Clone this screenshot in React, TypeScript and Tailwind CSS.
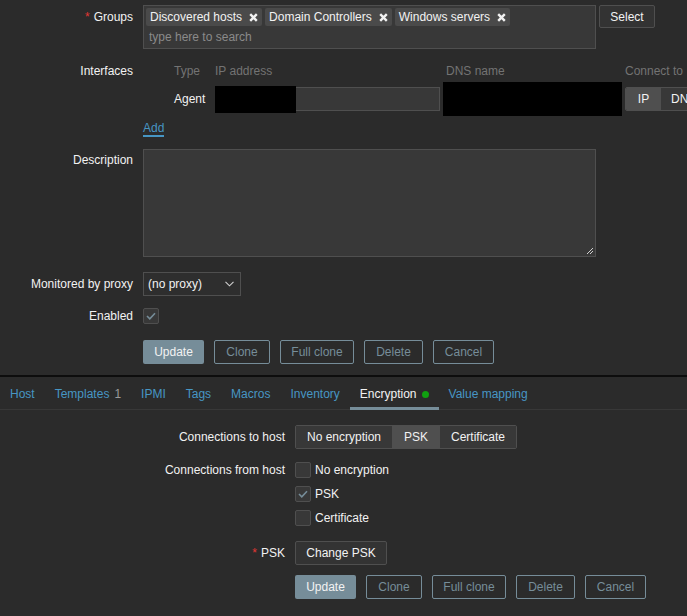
import React from 'react';

const FONT = { fontFamily: '"Liberation Sans", Arial, sans-serif' };

const Star = () => <span className="mr-[4px] text-[#e33734]">*</span>;

const CloseX = () => (
  <svg width="9" height="9" viewBox="0 0 9 9" className="ml-[7px]">
    <path d="M1.2 1.2L7.8 7.8M7.8 1.2L1.2 7.8" stroke="#f2f2f2" strokeWidth="2.4" />
  </svg>
);

const Tag: React.FC<{ text: string }> = ({ text }) => (
  <div className="flex h-[18px] items-center rounded-[2px] bg-[#4a4a4a] pl-[4px] pr-[4px] leading-[18px]">
    <span>{text}</span>
    <CloseX />
  </div>
);

const Check: React.FC<{ checked?: boolean }> = ({ checked }) => (
  <div className="flex h-[16px] w-[16px] items-center justify-center rounded-[2px] border border-[#4f4f4f] bg-[#383838]">
    {checked && (
      <svg width="10" height="8" viewBox="0 0 10 8">
        <path d="M1 4l2.8 2.8L9 1.2" fill="none" stroke="#768d99" strokeWidth="1.6" />
      </svg>
    )}
  </div>
);

const Buttons: React.FC = () => (
  <div className="flex h-[24px] gap-[10px]">
    <button className="h-full w-[61px] rounded-[2px] bg-[#768d99] text-[#f2f2f2]">Update</button>
    <button className="h-full w-[56px] rounded-[2px] border border-[#768d99] text-[#768d99]">Clone</button>
    <button className="h-full w-[74px] rounded-[2px] border border-[#768d99] text-[#768d99]">Full clone</button>
    <button className="h-full w-[59px] rounded-[2px] border border-[#768d99] text-[#768d99]">Delete</button>
    <button className="h-full w-[61px] rounded-[2px] border border-[#768d99] text-[#768d99]">Cancel</button>
  </div>
);

const tabs = ['Host', 'Templates', 'IPMI', 'Tags', 'Macros', 'Inventory', 'Encryption', 'Value mapping'];

const App: React.FC = () => {
  return (
    <div className="h-[616px] w-[687px] overflow-hidden bg-[#2b2b2b] text-[12px] text-[#f2f2f2]" style={FONT}>
      {/* host form, top part */}
      <div className="h-[375px] pt-[5px]">
        {/* Groups */}
        <div className="flex">
          <div className="w-[133px] shrink-0 pt-[5px] text-right leading-[14px]">
            <Star />Groups
          </div>
          <div className="ml-[10px] h-[44px] w-[453px] shrink-0 border border-[#4f4f4f] bg-[#383838] px-[2px] pt-[2px]">
            <div className="flex gap-[3px]">
              <Tag text="Discovered hosts" />
              <Tag text="Domain Controllers" />
              <Tag text="Windows servers" />
            </div>
            <div className="mt-[4px] pl-[3px] leading-[14px] text-[#8a8a8a]">type here to search</div>
          </div>
          <button className="ml-[3px] h-[23px] w-[56px] shrink-0 rounded-[2px] border border-[#4f4f4f] bg-[#333333]">Select</button>
        </div>

        {/* Interfaces */}
        <div className="mt-[15px] flex">
          <div className="w-[133px] shrink-0 text-right leading-[14px]">Interfaces</div>
          <div className="ml-[10px] shrink-0 pl-[31px]">
            <div className="flex leading-[14px] text-[#737373]">
              <div className="w-[41px]">Type</div>
              <div className="w-[228px]">IP address</div>
              <div className="w-[182px] pl-[3px]">DNS name</div>
              <div className="whitespace-nowrap">Connect to</div>
            </div>
            <div className="mt-[4px] flex h-[34px] items-center">
              <div className="w-[41px]">Agent</div>
              <div className="relative h-[24px] w-[225px] border border-[#4f4f4f] bg-[#383838]">
                <div className="absolute -left-px -top-[2px] h-[27px] w-[81px] bg-black" />
              </div>
              <div className="ml-[3px] h-[34px] w-[179px] bg-black" />
              <div className="ml-[3px] flex h-[24px] w-[80px] overflow-hidden rounded-[2px] border border-[#4f4f4f]">
                <div className="flex w-[35px] items-center justify-center bg-[#4f4f4f]">IP</div>
                <div className="flex flex-1 items-center bg-[#383838] pl-[10px]">DNS</div>
              </div>
            </div>
          </div>
        </div>

        {/* Add */}
        <div className="mt-[5px] flex h-[16px] leading-[14px]">
          <div className="w-[133px] shrink-0" />
          <div className="ml-[10px] flex">
            <span className="h-[16px] border-b-2 border-[#4796c4] leading-[14px] text-[#4796c4]">Add</span>
          </div>
        </div>

        {/* Description */}
        <div className="mt-[12px] flex">
          <div className="w-[133px] shrink-0 pt-[4px] text-right leading-[14px]">Description</div>
          <div className="relative ml-[10px] h-[108px] w-[453px] shrink-0 border border-[#4f4f4f] bg-[#383838]">
            <svg width="8" height="8" viewBox="0 0 8 8" className="absolute bottom-[1px] right-[1px]">
              <path d="M7 1L1 7M7 4L4 7" stroke="#d0d0d0" strokeWidth="1" />
            </svg>
          </div>
        </div>

        {/* Monitored by proxy */}
        <div className="mt-[15px] flex items-center">
          <div className="w-[133px] shrink-0 text-right">Monitored by proxy</div>
          <div className="ml-[10px] flex h-[24px] w-[98px] items-center justify-between border border-[#4f4f4f] bg-[#2e2e2e] pl-[4px] pr-[6px]">
            <span>(no proxy)</span>
            <svg width="9" height="6" viewBox="0 0 9 6">
              <path d="M0.5 0.8L4.5 4.8L8.5 0.8" fill="none" stroke="#d0d0d0" strokeWidth="1.1" />
            </svg>
          </div>
        </div>

        {/* Enabled */}
        <div className="mt-[12px] flex h-[16px] items-center">
          <div className="w-[133px] shrink-0 text-right">Enabled</div>
          <div className="ml-[10px]">
            <Check checked />
          </div>
        </div>

        <div className="mt-[16px] flex">
          <div className="w-[133px] shrink-0" />
          <div className="ml-[10px]">
            <Buttons />
          </div>
        </div>
      </div>

      <div className="h-[2px] bg-[#0d0d0d]" />

      {/* tabs */}
      <div className="flex h-[33px] border-b border-[#383838]">
        {tabs.map((t) => {
          const active = t === 'Encryption';
          return (
            <div key={t} className="relative flex items-center px-[10px] pt-[2px]">
              <span className={active ? 'text-[#f2f2f2]' : 'text-[#4796c4]'}>{t}</span>
              {t === 'Templates' && <span className="ml-[5px] text-[#9a9a9a]">1</span>}
              {active && <span className="ml-[5px] h-[7px] w-[7px] rounded-full bg-[#10a010]" />}
              {active && <div className="absolute -bottom-px left-0 right-0 h-[3px] bg-[#768d99]" />}
            </div>
          );
        })}
      </div>

      {/* encryption */}
      <div className="mt-[15px] flex items-center">
        <div className="w-[285px] shrink-0 text-right">Connections to host</div>
        <div className="ml-[10px] flex h-[24px] overflow-hidden rounded-[2px] border border-[#4f4f4f]">
          <div className="flex w-[96px] items-center justify-center bg-[#383838]">No encryption</div>
          <div className="flex w-[48px] items-center justify-center bg-[#4f4f4f]">PSK</div>
          <div className="flex w-[76px] items-center justify-center bg-[#383838]">Certificate</div>
        </div>
      </div>

      <div className="mt-[13px] flex">
        <div className="w-[285px] shrink-0 text-right leading-[16px]">Connections from host</div>
        <div className="ml-[10px] flex flex-col gap-[8px]">
          <div className="flex items-center">
            <Check />
            <span className="ml-[4px] leading-[16px]">No encryption</span>
          </div>
          <div className="flex items-center">
            <Check checked />
            <span className="ml-[4px] leading-[16px]">PSK</span>
          </div>
          <div className="flex items-center">
            <Check />
            <span className="ml-[4px] leading-[16px]">Certificate</span>
          </div>
        </div>
      </div>

      <div className="mt-[15px] flex items-center">
        <div className="w-[285px] shrink-0 text-right">
          <Star />PSK
        </div>
        <button className="ml-[10px] h-[24px] w-[92px] rounded-[2px] border border-[#4f4f4f] bg-[#333333]">Change PSK</button>
      </div>

      <div className="mt-[10px] flex">
        <div className="w-[285px] shrink-0" />
        <div className="ml-[10px]">
          <Buttons />
        </div>
      </div>
    </div>
  );
};

export default App;
